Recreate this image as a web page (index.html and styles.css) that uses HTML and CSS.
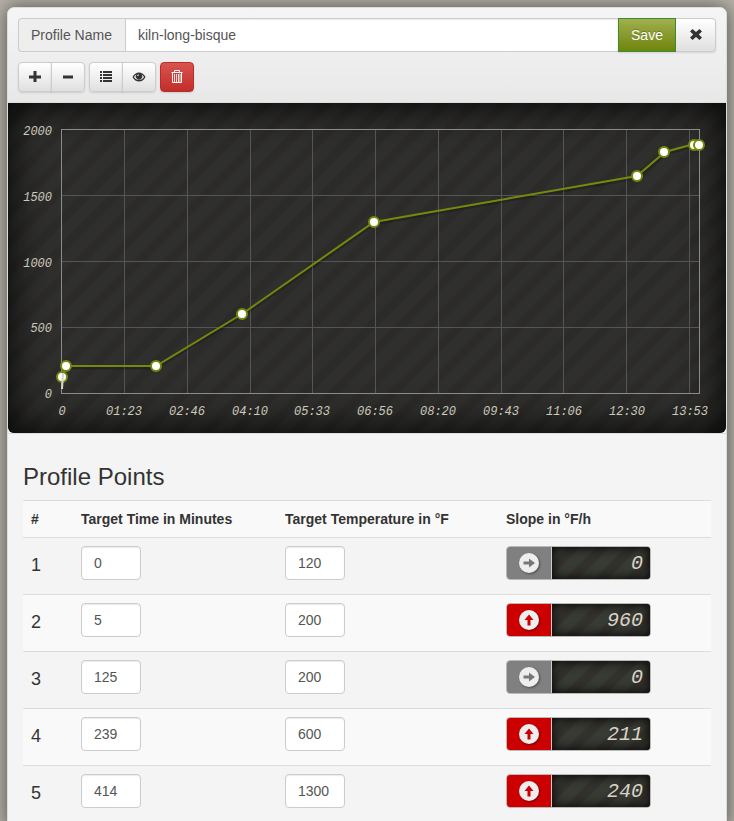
FILE: index.html
```html
<!DOCTYPE html>
<html lang="en">
<head>
<meta charset="utf-8">
<meta name="viewport" content="width=device-width, initial-scale=1">
<title>Kiln Profile</title>
<link rel="stylesheet" href="styles.css">
</head>
<body>
<svg class="sprite" aria-hidden="true">
  <symbol id="right" viewBox="0 0 22 22"><circle cx="11" cy="11" r="10" fill="#eee"/><path class="arrow" d="M5.500 9.500H11V6.500l6 4.500-6 4.500v-3H5.500z"/></symbol>
  <symbol id="up" viewBox="0 0 22 22"><circle cx="11" cy="11" r="10" fill="#eee"/><path class="arrow" d="M9.500 16.500V11H6.500L11 5.500l4.500 5.500h-3v5.500z"/></symbol>
</svg>
<main class="panel">
  <header class="panel-heading">
    <div class="input-group">
      <label class="addon" for="profile-name">Profile Name</label>
      <input class="form-control name" id="profile-name" type="text" value="kiln-long-bisque">
      <button class="btn save" type="button">Save</button>
      <button class="btn close" type="button" aria-label="Close"><svg width="14" height="14" viewBox="0 0 14 14"><path d="M1 3.500 3.500 1 7 4 10.500 1 13 3.500 9.800 6.500 13 9.500 10.500 12 7 9 3.500 12 1 9.500l3.200-3z"/></svg></button>
    </div>
    <div class="toolbar">
      <div class="btn-group">
        <button class="btn small" type="button" aria-label="Add point"><svg width="12" height="12" viewBox="0 0 12 12"><path d="M4.500 0h3v4.500H12v3H7.500V11h-3V7.500H0v-3h4.500z"/></svg></button>
        <button class="btn small" type="button" aria-label="Remove point"><svg width="12" height="12" viewBox="0 0 12 12"><path d="M1 4.500h10v3H1z"/></svg></button>
      </div>
      <div class="btn-group">
        <button class="btn small" type="button" aria-label="Toggle table"><svg width="12" height="12" viewBox="0 0 12 12"><path d="M0 0h2v2H0zM3 0h9v2H3zM0 3h2v2H0zM3 3h9v2H3zM0 6h2v2H0zM3 6h9v2H3zM0 9h2v2H0zM3 9h9v2H3z"/></svg></button>
        <button class="btn small" type="button" aria-label="Live preview"><svg width="14" height="12" viewBox="0 0 14 12"><path fill-rule="evenodd" d="M.5 6C3.500 0 10.500 0 13.500 6 10.500 12 3.500 12 .5 6zM2 6c2 4 8 4 10 0-.6-1.200-1.400-2-2.400-2.500a3.200 3.200 0 1 1-5.200 0C3.400 4 2.600 4.800 2 6z"/><path fill="#fff" d="M5.200 5c0-1 .8-1.700 1.600-1.700v.9c-.5 0-.8.3-.8.800z"/></svg></button>
      </div>
      <button class="btn small danger" type="button" aria-label="Delete profile"><svg width="12" height="14" viewBox="0 0 12 14"><path fill="none" stroke="#fff" d="M.5 2.500h11M3.500 2V.5h5V2M1.500 3v9.500h9V3"/><path fill="none" stroke="#fff" stroke-opacity=".8" d="M3.500 4v8M5.500 4v8M7.500 4v8M9 4v8"/></svg></button>
    </div>
  </header>

  <section class="chart">
    <svg viewBox="0 0 718 330" role="img" aria-label="Target temperature over time">
      <g class="grid">
        <path d="M116.500 26v264M179.500 26v264M242.500 26v264M304.500 26v264M367.500 26v264M430.500 26v264M493.500 26v264M555.500 26v264M618.500 26v264M681.500 26v264M53 92.500h638M53 158.500h638M53 224.500h638"/>
        <rect class="frame" x="53.500" y="26.500" width="638" height="264"/>
      </g>
      <g class="ticks y">
        <text x="44" y="32">2000</text><text x="44" y="98">1500</text><text x="44" y="164">1000</text><text x="44" y="229">500</text><text x="44" y="295">0</text>
      </g>
      <g class="ticks x">
        <text x="54" y="312">0</text><text x="116" y="312">01:23</text><text x="179" y="312">02:46</text><text x="242" y="312">04:10</text><text x="304" y="312">05:33</text><text x="367" y="312">06:56</text><text x="430" y="312">08:20</text><text x="493" y="312">09:43</text><text x="556" y="312">11:06</text><text x="619" y="312">12:30</text><text x="682" y="312">13:53</text>
      </g>
      <polyline class="shade" points="54,276 58,265 148,265 234,213 366,121 629,75 657,51 686,43 691,43"/>
      <polyline class="line" points="54,274 58,263 148,263 234,211 366,119 629,73 657,49 686,41 691,41"/>
      <g class="points">
        <circle cx="54" cy="274" r="5"/><circle cx="58" cy="263" r="5"/><circle cx="148" cy="263" r="5"/><circle cx="234" cy="211" r="5"/><circle cx="366" cy="119" r="5"/><circle cx="629" cy="73" r="5"/><circle cx="656" cy="49" r="5"/><circle cx="686" cy="42" r="5"/><circle cx="691" cy="42" r="5"/>
      </g>
      <path class="live" d="M55 270 54 286"/>
    </svg>
  </section>

  <section class="points-section">
    <h3>Profile Points</h3>
    <table>
      <colgroup><col class="c-num"><col class="c-time"><col class="c-temp"><col></colgroup>
      <thead><tr><th>#</th><th>Target Time in Minutes</th><th>Target Temperature in °F</th><th>Slope in °F/h</th></tr></thead>
      <tbody>
        <tr><td class="num">1</td><td><input class="form-control" type="text" aria-label="Time 1" value="0"></td><td><input class="form-control" type="text" aria-label="Temperature 1" value="120"></td><td><div class="slope"><span class="dir"><svg><use href="#right"/></svg></span><span class="lcd">0</span></div></td></tr>
        <tr><td class="num">2</td><td><input class="form-control" type="text" aria-label="Time 2" value="5"></td><td><input class="form-control" type="text" aria-label="Temperature 2" value="200"></td><td><div class="slope"><span class="dir rise"><svg><use href="#up"/></svg></span><span class="lcd">960</span></div></td></tr>
        <tr><td class="num">3</td><td><input class="form-control" type="text" aria-label="Time 3" value="125"></td><td><input class="form-control" type="text" aria-label="Temperature 3" value="200"></td><td><div class="slope"><span class="dir"><svg><use href="#right"/></svg></span><span class="lcd">0</span></div></td></tr>
        <tr><td class="num">4</td><td><input class="form-control" type="text" aria-label="Time 4" value="239"></td><td><input class="form-control" type="text" aria-label="Temperature 4" value="600"></td><td><div class="slope"><span class="dir rise"><svg><use href="#up"/></svg></span><span class="lcd">211</span></div></td></tr>
        <tr><td class="num">5</td><td><input class="form-control" type="text" aria-label="Time 5" value="414"></td><td><input class="form-control" type="text" aria-label="Temperature 5" value="1300"></td><td><div class="slope"><span class="dir rise"><svg><use href="#up"/></svg></span><span class="lcd">240</span></div></td></tr>
      </tbody>
    </table>
  </section>
</main>
</body>
</html>
```
FILE: styles.css
```css
* { box-sizing: border-box; }
body {
  margin: 0;
  height: 100vh;
  overflow: hidden;
  padding: 7px 7px 0;
  background: #b4b0a7;
  color: #333;
  font: 14px/20px "Liberation Sans", Arial, sans-serif;
}
.sprite { display: none; }
.panel {
  min-height: 100vh;
  background: #f4f4f4;
  border: 1px solid #ddd;
  border-radius: 7px;
  box-shadow: 0 0 18px rgba(0, 0, 0, .55);
}
.panel-heading {
  padding: 10px 10px 10px;
  border-bottom: 1px solid #ddd;
  border-radius: 6px 6px 0 0;
  background: linear-gradient(#f5f5f5, #e8e8e8);
}
.input-group, .toolbar, .btn-group { display: flex; }
.toolbar { gap: 4px; margin-top: 10px; }
.addon {
  display: flex;
  align-items: center;
  min-width: 107px;
  padding: 0 12px;
  border: 1px solid #ccc;
  border-right: 0;
  border-radius: 4px 0 0 4px;
  background: #eee;
  color: #555;
}
.form-control {
  display: block;
  width: 60px;
  height: 34px;
  padding: 6px 12px;
  border: 1px solid #ccc;
  border-radius: 4px;
  background: #fff;
  box-shadow: inset 0 1px 1px rgba(0, 0, 0, .08);
  color: #555;
  font: inherit;
}
.form-control.name { flex: 1; width: auto; min-width: 0; border-radius: 0; border-right: 0; }
.btn {
  display: flex;
  align-items: center;
  justify-content: center;
  height: 34px;
  padding: 0;
  border: 1px solid #ccc;
  border-radius: 4px;
  background: linear-gradient(#fff, #e0e0e0);
  box-shadow: 0 1px 2px rgba(0, 0, 0, .12);
  color: #333;
  font: inherit;
}
.btn svg { fill: #333; }
.save {
  width: 58px;
  border-color: #398f2f;
  border-radius: 0;
  background: linear-gradient(#a1b04e, #6f840b);
  color: #fff;
  text-shadow: 0 -1px 0 rgba(0, 0, 0, .25);
}
.close { width: 40px; border-left: 0; border-radius: 0 4px 4px 0; }
.small { width: 34px; height: 30px; }
.btn-group .btn:first-child { border-radius: 4px 0 0 4px; }
.btn-group .btn:last-child { margin-left: -1px; border-radius: 0 4px 4px 0; }
.danger { border-color: #b92c28; background: linear-gradient(#d9534f, #c12e2a); }
.chart {
  border-bottom: 1px solid #ddd;
  background: #f4f4f4;
}
.chart svg {
  display: block;
  width: 100%;
  border-radius: 0 0 6px 6px;
  background: repeating-linear-gradient(135deg, #2f302e 0 9px, #2c2b29 12px 19px, #2f302e 21px);
  box-shadow: inset 0 0 40px #000;
}
.grid path, .grid .frame { fill: none; stroke: #555553; }
.grid .frame { stroke: #8b8b88; }
.ticks { fill: #cdc9bb; font: italic 12px "Liberation Mono", monospace; }
.ticks.y { text-anchor: end; }
.ticks.x { text-anchor: middle; }
.line, .shade { fill: none; stroke: #75890c; stroke-width: 2; }
.shade { stroke: #000; stroke-opacity: .2; stroke-width: 3; }
.points { fill: #fff; stroke: #75890c; stroke-width: 2; }
.live { stroke: #d8d3c5; stroke-width: 2; }
.points-section { padding: 20px 15px 0; }
h3 { margin: 10px 0; font-size: 24px; font-weight: 400; line-height: 26px; }
table { width: 100%; border-collapse: separate; border-spacing: 0; table-layout: fixed; }
.c-num { width: 50px; }
.c-time { width: 204px; }
.c-temp { width: 221px; }
th, td { border-top: 1px solid #ddd; padding: 8px; text-align: left; vertical-align: top; }
td { padding-bottom: 14px; }
thead tr, tbody tr:nth-child(even) { background: #f9f9f9; }
td.num { font-size: 18px; padding-top: 17px; }
.slope {
  display: flex;
  width: 145px;
  height: 34px;
  overflow: hidden;
  border: 1px solid #b9b9b5;
  border-radius: 4px;
}
.dir {
  display: flex;
  align-items: center;
  justify-content: center;
  width: 45px;
  border-right: 1px solid #ccc;
  background: #808080;
  color: #777;
}
.dir.rise { background: #c00; color: #c00; }
.dir svg { width: 22px; height: 22px; filter: drop-shadow(1px 1px 1px rgba(0, 0, 0, .4)); }
.arrow { fill: currentColor; }
.lcd {
  flex: 1;
  padding: 0 7px;
  background: repeating-linear-gradient(135deg, #383a34 0 9px, #32312d 12px 19px, #383a34 21px);
  box-shadow: inset 0 0 12px #000;
  color: #d8d3c5;
  font: italic 20px/34px "Liberation Mono", monospace;
  text-align: right;
}
```
